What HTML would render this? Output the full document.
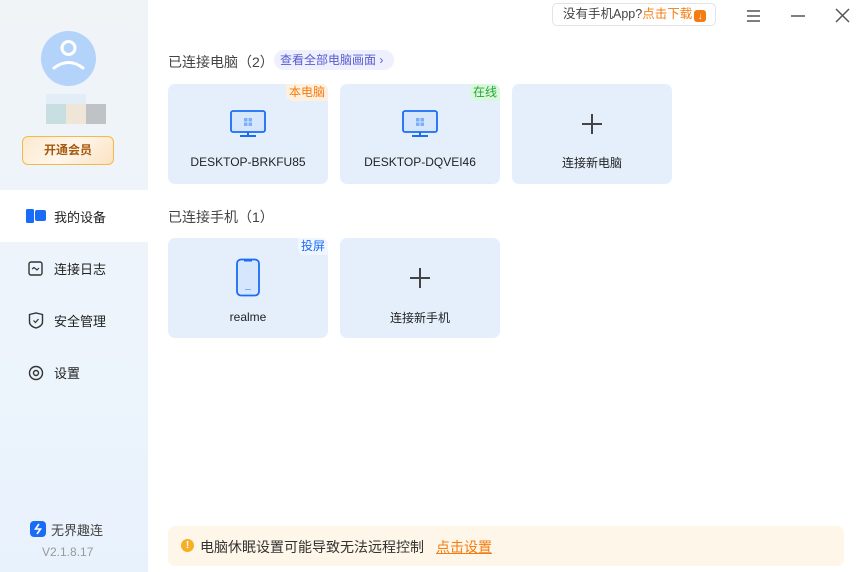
<!DOCTYPE html>
<html><head><meta charset="utf-8"><style>
*{margin:0;padding:0;box-sizing:border-box}
body{width:864px;height:572px;overflow:hidden;background:#fff;font-family:"Liberation Sans","Noto Sans CJK SC",sans-serif;position:relative;color:#222}
.side{position:absolute;left:0;top:0;width:148px;height:572px;background:linear-gradient(#f0f4f7,#edf4fc 60%,#e8f2fd)}
.abs{position:absolute}
.nav{position:absolute;left:0;width:148px;height:52px;font-size:13px;color:#222}
.nav span{position:absolute;left:54px;top:17px}
.card{position:absolute;width:160px;height:100px;background:#e5effc;border-radius:7px}
.card .t{position:absolute;left:0;right:0;text-align:center;font-size:12px;color:#222}
.tag{position:absolute;right:0;top:0;font-size:12px;padding:0 3px;border-radius:0 7px 0 7px;line-height:17px}
.plus{position:absolute;left:70px;top:30px;width:20px;height:20px}
.plus:before{content:"";position:absolute;left:9px;top:0;width:2px;height:20px;background:#444}
.plus:after{content:"";position:absolute;left:0;top:9px;width:20px;height:2px;background:#444}
</style></head><body>
<div class="side"></div>
<div class="abs" style="left:41px;top:31px;width:55px;height:55px;border-radius:50%;background:#b3d3fb"></div>
<svg class="abs" style="left:41px;top:31px" width="55" height="55"><circle cx="27.5" cy="17" r="6.5" fill="none" stroke="#fff" stroke-width="3"/><path d="M13 37 Q27.5 26 42 37" fill="none" stroke="#fff" stroke-width="3" stroke-linecap="round"/></svg>
<div class="abs" style="left:46px;top:94px;width:20px;height:10px;background:#e3edf8"></div>
<div class="abs" style="left:66px;top:94px;width:20px;height:10px;background:#e3edf8"></div>
<div class="abs" style="left:46px;top:104px;width:20px;height:20px;background:#c7dfe0"></div>
<div class="abs" style="left:66px;top:104px;width:20px;height:20px;background:#f0e6d8"></div>
<div class="abs" style="left:86px;top:104px;width:20px;height:20px;background:#bfc3c6"></div>
<div class="abs" style="left:22px;top:136px;width:92px;height:29px;border:1px solid #f5b94a;border-radius:6px;background:linear-gradient(135deg,#fbe9cf,#fff6ea,#fbe2c2);color:#a55a10;font-size:12px;font-weight:bold;text-align:center;line-height:27px">开通会员</div>
<div class="nav" style="top:190px;background:#fff"><svg class="abs" style="left:26px;top:18px" width="22" height="16"><rect x="0" y="1" width="8" height="14" rx="1.5" fill="#1a6cf6"/><rect x="9" y="2" width="11" height="11" rx="2" fill="#1a6cf6"/></svg><span>我的设备</span></div>
<div class="nav" style="top:242px"><svg class="abs" style="left:28px;top:19px" width="16" height="16"><rect x="1" y="1" width="13" height="13" rx="2" fill="none" stroke="#333" stroke-width="1.4"/><path d="M4 8 L6 6.5 L9 9 L11 7" fill="none" stroke="#333" stroke-width="1.2"/></svg><span>连接日志</span></div>
<div class="nav" style="top:294px"><svg class="abs" style="left:28px;top:18px" width="16" height="17"><path d="M1.5 2.5 L8 1 L14.5 2.5 V10 Q14.5 14 8 16 Q1.5 14 1.5 10 Z" fill="none" stroke="#333" stroke-width="1.4"/><path d="M5.5 8.5 L7.5 10.5 L10.5 7" fill="none" stroke="#333" stroke-width="1.2"/></svg><span>安全管理</span></div>
<div class="nav" style="top:346px"><svg class="abs" style="left:28px;top:19px" width="16" height="16"><circle cx="8" cy="8" r="6.5" fill="none" stroke="#333" stroke-width="1.4"/><circle cx="8" cy="8" r="2.5" fill="none" stroke="#333" stroke-width="1.4"/></svg><span>设置</span></div>
<div class="abs" style="left:30px;top:521px;width:16px;height:16px;border-radius:4px;background:#1a6cf6"></div>
<svg class="abs" style="left:30px;top:521px" width="16" height="16"><path d="M9 3 L5.5 8 L10.5 8 L7 13" fill="none" stroke="#fff" stroke-width="1.6"/></svg>
<div class="abs" style="left:51px;top:520px;font-size:13px;color:#444">无界趣连</div>
<div class="abs" style="left:42px;top:545px;font-size:12px;color:#999">V2.1.8.17</div>

<div class="abs" style="left:552px;top:3px;width:164px;height:23px;border:1px solid #e0e3e8;border-radius:5px;font-size:12.5px;line-height:21px;padding-left:10px;color:#444;white-space:nowrap">没有手机App?<span style="color:#f57c10">点击下载</span><span style="display:inline-block;width:12px;height:12px;background:#f57c10;border-radius:3px;vertical-align:-1px;margin-left:2px;color:#fff;font-size:9px;line-height:12px;text-align:center">↓</span></div>
<svg class="abs" style="left:745px;top:8px" width="110" height="16"><path d="M2 3H15M2 8H15M2 13H15M46 8H60M91 1L104 14M104 1L91 14" stroke="#555" stroke-width="1.5"/></svg>

<div class="abs" style="left:168px;top:52px;font-size:14px;color:#444">已连接电脑（2）</div>
<div class="abs" style="left:274px;top:50px;width:120px;height:20px;border-radius:10px;background:#eef0fd;font-size:12px;color:#5a5ad0;line-height:20px;padding-left:6px">查看全部电脑画面 ›</div>

<div class="card" style="left:168px;top:84px"><div class="tag" style="background:#fdf0de;color:#f57c10">本电脑</div>
<svg class="abs" style="left:62px;top:26px" width="36" height="28"><rect x="1" y="1" width="34" height="21" rx="2" fill="#d6e6fd" stroke="#1a6cf6" stroke-width="1.8"/><path d="M14 8h3.5v3.5H14zM18.5 8H22v3.5h-3.5zM14 12.5h3.5V16H14zM18.5 12.5H22V16h-3.5z" fill="#7ab0fa"/><rect x="10" y="25" width="16" height="2" fill="#1a6cf6"/><rect x="17" y="22" width="2" height="4" fill="#1a6cf6"/></svg>
<div class="t" style="top:71px">DESKTOP-BRKFU85</div></div>
<div class="card" style="left:340px;top:84px"><div class="tag" style="background:#d9f7dd;color:#22a832">在线</div>
<svg class="abs" style="left:62px;top:26px" width="36" height="28"><rect x="1" y="1" width="34" height="21" rx="2" fill="#d6e6fd" stroke="#1a6cf6" stroke-width="1.8"/><path d="M14 8h3.5v3.5H14zM18.5 8H22v3.5h-3.5zM14 12.5h3.5V16H14zM18.5 12.5H22V16h-3.5z" fill="#7ab0fa"/><rect x="10" y="25" width="16" height="2" fill="#1a6cf6"/><rect x="17" y="22" width="2" height="4" fill="#1a6cf6"/></svg>
<div class="t" style="top:71px">DESKTOP-DQVEI46</div></div>
<div class="card" style="left:512px;top:84px"><div class="plus"></div><div class="t" style="top:70px">连接新电脑</div></div>

<div class="abs" style="left:168px;top:207px;font-size:14px;color:#444">已连接手机（1）</div>
<div class="card" style="left:168px;top:238px"><div class="tag" style="color:#1a6cf6;background:#f0f6ff">投屏</div>
<svg class="abs" style="left:68px;top:20px" width="24" height="40"><rect x="1" y="1.5" width="22" height="36" rx="4" fill="#d6e6fd" stroke="#1a6cf6" stroke-width="1.8"/><rect x="8" y="2" width="8" height="1.5" fill="#1a6cf6"/><rect x="9" y="31" width="6" height="1" fill="#7ab0fa"/></svg>
<div class="t" style="top:72px">realme</div></div>
<div class="card" style="left:340px;top:238px"><div class="plus"></div><div class="t" style="top:71px">连接新手机</div></div>

<div class="abs" style="left:168px;top:526px;width:676px;height:40px;background:#fef6e8;border-radius:7px"></div>
<div class="abs" style="left:181px;top:539px;width:13px;height:13px;border-radius:50%;background:#f5b025;color:#fff;font-size:10px;font-weight:bold;text-align:center;line-height:13px">!</div>
<div class="abs" style="left:200px;top:537px;font-size:14px;color:#333">电脑休眠设置可能导致无法远程控制</div>
<div class="abs" style="left:436px;top:537px;font-size:14px;color:#f57c10;text-decoration:underline">点击设置</div>
</body></html>
